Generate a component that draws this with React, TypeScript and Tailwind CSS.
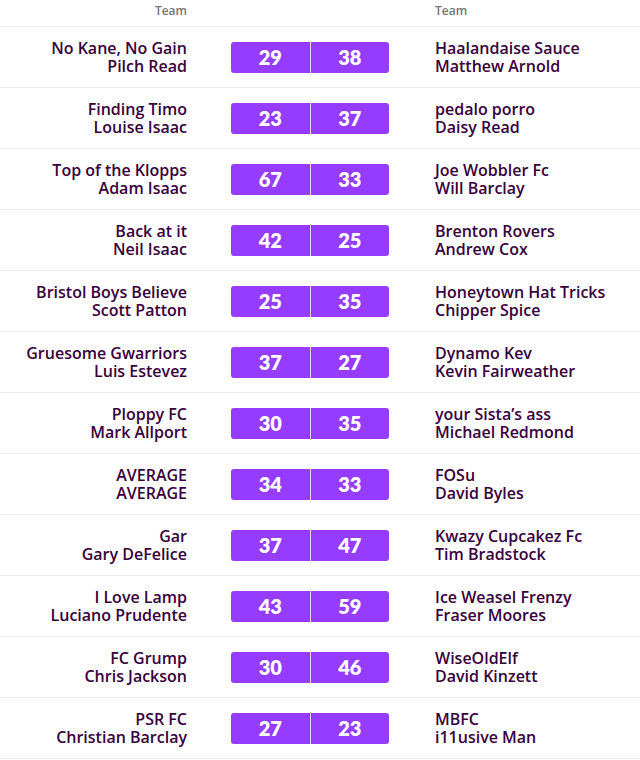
const fixtures = [
  { home: "No Kane, No Gain", homeMgr: "Pilch Read", hs: 29, as: 38, away: "Haalandaise Sauce", awayMgr: "Matthew Arnold" },
  { home: "Finding Timo", homeMgr: "Louise Isaac", hs: 23, as: 37, away: "pedalo porro", awayMgr: "Daisy Read" },
  { home: "Top of the Klopps", homeMgr: "Adam Isaac", hs: 67, as: 33, away: "Joe Wobbler Fc", awayMgr: "Will Barclay" },
  { home: "Back at it", homeMgr: "Neil Isaac", hs: 42, as: 25, away: "Brenton Rovers", awayMgr: "Andrew Cox" },
  { home: "Bristol Boys Believe", homeMgr: "Scott Patton", hs: 25, as: 35, away: "Honeytown Hat Tricks", awayMgr: "Chipper Spice" },
  { home: "Gruesome Gwarriors", homeMgr: "Luis Estevez", hs: 37, as: 27, away: "Dynamo Kev", awayMgr: "Kevin Fairweather" },
  { home: "Ploppy FC", homeMgr: "Mark Allport", hs: 30, as: 35, away: "your Sista’s ass", awayMgr: "Michael Redmond" },
  { home: "AVERAGE", homeMgr: "AVERAGE", hs: 34, as: 33, away: "FOSu", awayMgr: "David Byles" },
  { home: "Gar", homeMgr: "Gary DeFelice", hs: 37, as: 47, away: "Kwazy Cupcakez Fc", awayMgr: "Tim Bradstock" },
  { home: "I Love Lamp", homeMgr: "Luciano Prudente", hs: 43, as: 59, away: "Ice Weasel Frenzy", awayMgr: "Fraser Moores" },
  { home: "FC Grump", homeMgr: "Chris Jackson", hs: 30, as: 46, away: "WiseOldElf", awayMgr: "David Kinzett" },
  { home: "PSR FC", homeMgr: "Christian Barclay", hs: 27, as: 23, away: "MBFC", awayMgr: "i11usive Man" },
];

export default function App() {
  return (
    <div className="w-[640px] bg-white font-['Open_Sans',sans-serif] text-[#37003c]">
      {/* Header */}
      <div className="flex h-[27px] items-center border-b border-[#ebebeb] pb-[5px] text-[12px] font-semibold text-[#76766f]">
        <div className="w-[187px] text-right">Team</div>
        <div className="w-[248px]" />
        <div>Team</div>
      </div>

      {fixtures.map((f, i) => (
        <div key={i} className="flex h-[61px] items-center border-b border-[#ebebeb]">
          {/* home team / manager */}
          <p className="w-[187px] text-right text-[16px] font-semibold leading-[18px]">
            {f.home}
            <br />
            {f.homeMgr}
          </p>
          {/* score */}
          <div className="ml-[44px] flex h-[31px] w-[158px] rounded-[3px] bg-[#963cff] font-['Lato',sans-serif] text-[20px] font-extrabold text-white">
            <div className="flex flex-1 items-center justify-center border-r border-white/80">{f.hs}</div>
            <div className="flex flex-1 items-center justify-center">{f.as}</div>
          </div>
          {/* away team / manager */}
          <p className="ml-[46px] text-[16px] font-semibold leading-[18px]">
            {f.away}
            <br />
            {f.awayMgr}
          </p>
        </div>
      ))}
    </div>
  );
}
